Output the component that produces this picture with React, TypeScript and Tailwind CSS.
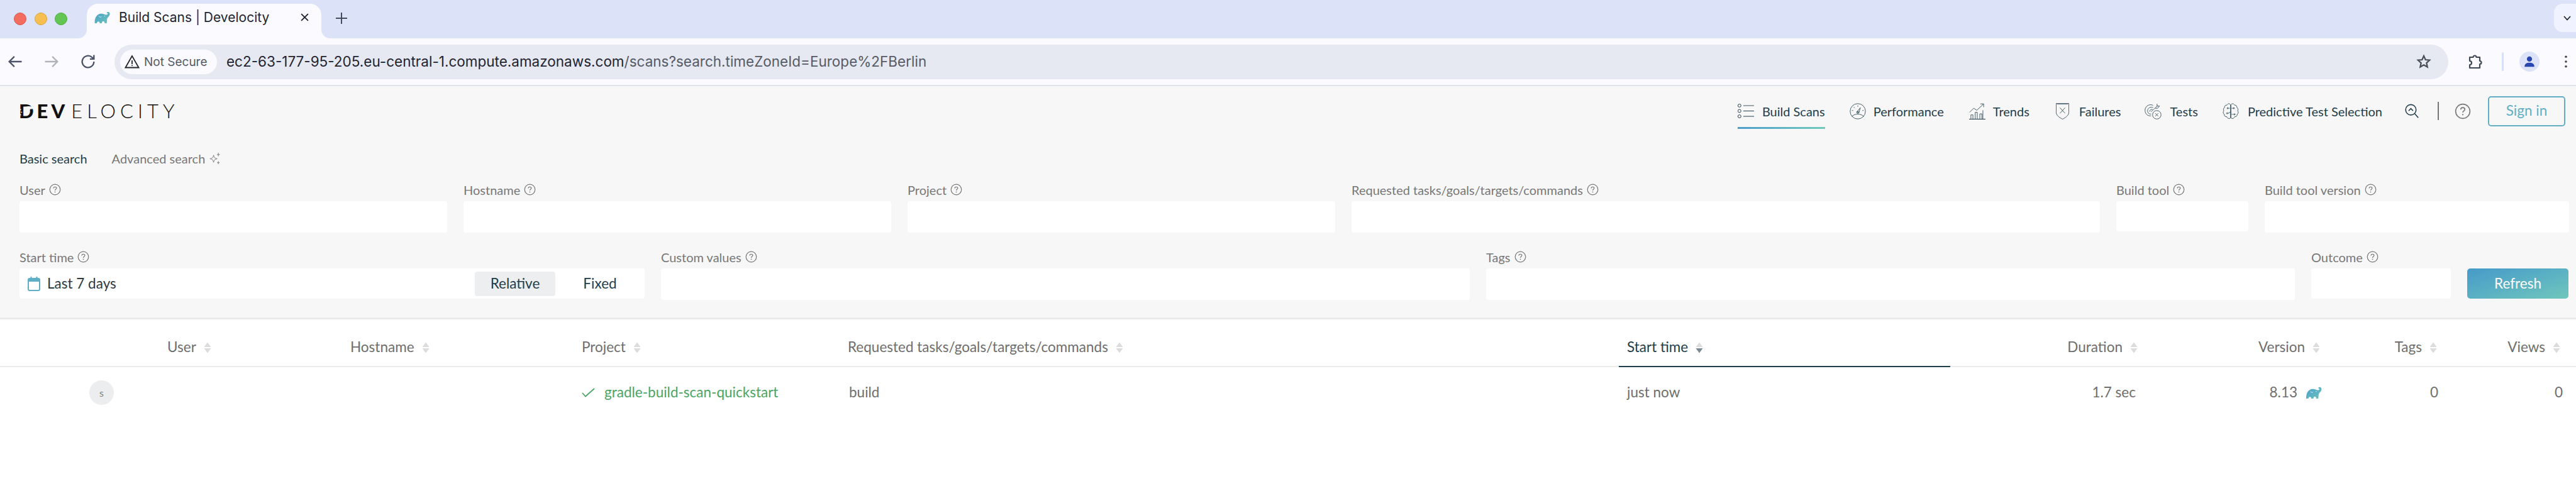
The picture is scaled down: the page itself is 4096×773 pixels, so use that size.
const F = "font-['Lato','Liberation_Sans',sans-serif]";

function Help({ className = "w-[19px] h-[19px]" }: { className?: string }) {
  return (
    <svg viewBox="0 0 16 16" className={"shrink-0 " + className} fill="none">
      <circle cx="8" cy="8" r="7" stroke="#777" strokeWidth="1" />
      <path d="M6 6.300C6 5 7 4.400 8 4.400c1.200 0 2 .8 2 1.800 0 1.400-2 1.500-2 3" stroke="#777" strokeWidth="1" />
      <circle cx="8" cy="11.300" r=".7" fill="#777" />
    </svg>
  );
}

function Sort({ down = "#dcdcdc" }: { down?: string }) {
  return (
    <svg viewBox="0 0 12 18" className="w-[12px] h-[18px] shrink-0 ml-[12px]">
      <path d="M6 0.500 11.500 8H.5z" fill="#dcdcdc" />
      <path d="M6 17.500 .5 10h11z" fill={down} />
    </svg>
  );
}

function Gradle({ className = "" }: { className?: string }) {
  return (
    <svg viewBox="0 0 32 24" className={className}>
      <defs>
        <linearGradient id="gr" x1="0" y1="0" x2="1" y2="1">
          <stop offset="0" stopColor="#4a9fc9" />
          <stop offset="1" stopColor="#6bc3bd" />
        </linearGradient>
      </defs>
      <path
        fill="url(#gr)"
        d="M1 24C0 15 4 7 11 5C15 4 19 5 22 6.500C25 7.500 27 6.500 27.500 5C27.800 3.800 26.300 3.300 25.600 4.500C24.800 3.500 25.300 1 28 1C31 1 32 4 31.300 7C30.500 10.500 27 12 26 15C25.500 18 25.500 21 25.300 24L21 24C21 21 19.500 20 18.200 20C16.500 20 15.500 21.500 15.300 24L11 24C11 21.500 10 20.500 8.200 20.500C6.500 20.500 5.300 22 5 24Z"
      />
      <path d="M9 9.500c1.500 2 3.500 2.500 5.500 1.500" stroke="#fff" strokeWidth="1" fill="none" />
      <circle cx="21" cy="9.500" r=".8" fill="#fff" />
    </svg>
  );
}

const navStroke = "#1f3d4a";

function ListIcon() {
  return (
    <svg viewBox="0 0 32 28" className="w-[26px] h-[23px] shrink-0" fill="none" stroke={navStroke} strokeWidth="1.200">
      <circle cx="3.500" cy="3.500" r="3" />
      <circle cx="3.500" cy="14" r="3" />
      <circle cx="3.500" cy="24.500" r="3" />
      <path d="M11 3.500h21" stroke="#5d7380" strokeWidth="1.500" />
      <path d="M11 14h21M11 24.500h21" />
    </svg>
  );
}
function GaugeIcon() {
  return (
    <svg viewBox="0 0 32 32" className="w-[26px] h-[26px] shrink-0" fill="none" stroke={navStroke} strokeWidth="1">
      <circle cx="16" cy="16" r="15" />
      <path d="M4.500 26c6-6 17-6 23 0" />
      <path d="M14 17.500 21 9l-2.800 10z" />
      <circle cx="16" cy="18" r="2" />
      <path d="M16 4.500v2.500M8 7.500l1.700 1.900M4.500 14.500h2.500M25 14.500h2.500" />
    </svg>
  );
}
function TrendIcon() {
  return (
    <svg viewBox="0 0 32 32" className="w-[26px] h-[26px] shrink-0" fill="none" stroke={navStroke} strokeWidth="1">
      <path d="M0 31.500h32" strokeWidth="1.400" />
      <path d="M3.500 31V23h4v8M12 31V18h4v13M21 31V21h4v10M27 31V14" />
      <path d="M1 18 9 10l6 4L28 2M22 1.500h6.500V8" />
    </svg>
  );
}
function ShieldIcon() {
  return (
    <svg viewBox="0 0 26 32" className="w-[21px] h-[26px] shrink-0" fill="none" stroke={navStroke} strokeWidth="1">
      <path d="M.5 .5h25v17c0 6-5 10-12.500 14C5.500 27.500.5 23.500.5 17.500z" />
      <path d="M2 2h22" strokeWidth=".8" />
      <path d="M8 9l10 11M18 9 8 20" />
    </svg>
  );
}
function TargetIcon() {
  return (
    <svg viewBox="0 0 34 32" className="w-[27px] h-[26px] shrink-0" fill="none" stroke={navStroke} strokeWidth="1">
      <path d="M17 4C9 .5 1 6 1 14c0 7 5 12 12 11" />
      <path d="M17 8.500c-5-2-11 1-11 6.500 0 4 3 7 7 6.500" />
      <path d="M16 12.500c-3-1-6 1-5.500 4" />
      <path d="M13 17 26 5M25 1v4.500h5L26 10h-4.500" />
      <circle cx="24.500" cy="23" r="8.500" />
      <path d="M21.500 20l6 6M27.500 20l-6 6" />
    </svg>
  );
}
function BrainIcon() {
  return (
    <svg viewBox="0 0 32 32" className="w-[26px] h-[26px] shrink-0" fill="none" stroke={navStroke} strokeWidth="1">
      <path d="M15.500 3c-2-3-6-2-7 1-3-.5-5 2-4.500 4.500C1.500 10 1 13 2.500 15 .5 17 1 21 3.500 22c-.5 3 2 5 4.500 4.500 1 3 5 5 7.500 2.500z" />
      <path d="M16.500 3c2-3 6-2 7 1 3-.5 5 2 4.500 4.500 2.500 1.500 3 4.500 1.500 6.500 2 2 1.500 6-1 7 .5 3-2 5-4.500 4.500-1 3-5 5-7.500 2.500z" />
      <path d="M16 3v26" stroke="#5d7380" strokeWidth="1.400" />
      <path d="M10 10h12M16 22h7" stroke="#5d7380" />
      <circle cx="10" cy="10" r="1.200" />
      <circle cx="22" cy="10" r="1.200" />
      <circle cx="23.500" cy="22" r="1.200" />
      <circle cx="9" cy="20" r="1.200" />
      <path d="M10 20.500 16 17" />
    </svg>
  );
}

function NavItem({ icon, label, active, className }: { icon: React.ReactNode; label: string; active?: boolean; className: string }) {
  return (
    <div className={"relative flex items-center h-full " + className}>
      {icon}
      <span className="text-[20px] text-[#1f3d4a] leading-none whitespace-nowrap">{label}</span>
      {active && (
        <div className="absolute left-0 right-0 top-[65px] h-[3px] bg-gradient-to-r from-[#4a9dcb] to-[#71c9bb]" />
      )}
    </div>
  );
}

function Label({ text }: { text: string }) {
  return (
    <div className="flex items-center gap-[6px] h-[19px] mb-[9px] text-[20px] leading-none text-[#777777] whitespace-nowrap">
      {text}
      <Help />
    </div>
  );
}

function Field({ label, width, inputH = "h-[50px]" }: { label: string; width: string; inputH?: string }) {
  return (
    <div className={"flex flex-col shrink-0 " + width}>
      <Label text={label} />
      <div className={"bg-white rounded-[4px] " + inputH} />
    </div>
  );
}

function Th({ label, className }: { label: string; className: string }) {
  return (
    <div className={"flex items-center text-[22.500px] leading-none text-[#6e6e6e] h-full whitespace-nowrap shrink-0 " + className}>
      <span>{label}</span>
      <Sort />
    </div>
  );
}

export default function App() {
  return (
    <div className={"w-[4096px] h-[773px] bg-white overflow-hidden flex flex-col " + F}>
      {/* tab strip */}
      <div className="h-[61px] bg-[#dce2f7] flex shrink-0 font-['Inter',sans-serif]">
        <div className="flex items-center gap-[12.500px] pl-[22px] w-[138px] pb-[2px] shrink-0">
          <div className="w-[20px] h-[20px] rounded-full bg-[#f26c60] border border-[#d9564c]" />
          <div className="w-[20px] h-[20px] rounded-full bg-[#f6bf4f] border border-[#dba53a]" />
          <div className="w-[20px] h-[20px] rounded-full bg-[#62c554] border border-[#4fae43]" />
        </div>
        <div className="relative mt-[6px] h-[55px] w-[373px] bg-[#fbfbff] rounded-t-[18px] flex items-center pl-[12px] pr-[20px] pb-[12px] shrink-0">
          <div className="absolute bottom-0 left-[-14px] w-[14px] h-[14px] bg-[#fbfbff]">
            <div className="w-full h-full bg-[#dce2f7] rounded-br-[14px]" />
          </div>
          <div className="absolute bottom-0 right-[-14px] w-[14px] h-[14px] bg-[#fbfbff]">
            <div className="w-full h-full bg-[#dce2f7] rounded-bl-[14px]" />
          </div>
          <Gradle className="w-[25px] h-[19px] shrink-0" />
          <span className="ml-[14px] text-[21px] leading-none text-[#1f2430] whitespace-nowrap">Build Scans | Develocity</span>
          <svg viewBox="0 0 12 12" className="ml-auto w-[13px] h-[13px] shrink-0" stroke="#1f2430" strokeWidth="1.700">
            <path d="M1 1l10 10M11 1 1 11" />
          </svg>
        </div>
        <svg viewBox="0 0 20 20" className="ml-[22px] mt-[19px] w-[20px] h-[20px] shrink-0" stroke="#444b5c" strokeWidth="2">
          <path d="M10 1v18M1 10h18" />
        </svg>
        <div className="ml-auto mt-[6px] h-[45px] w-[35px] bg-[#f0f3ff] rounded-l-[14px] flex items-center justify-end pr-[8px] shrink-0">
          <svg viewBox="0 0 12 8" className="w-[12px] h-[8px]" fill="none" stroke="#1f2430" strokeWidth="1.800">
            <path d="M1 1l5 5.500L11 1" />
          </svg>
        </div>
      </div>
      {/* toolbar */}
      <div className="h-[76px] bg-[#fbfbff] border-b-2 border-[#dfe3ea] flex items-center shrink-0 pl-[10px] font-['Inter',sans-serif]">
        <div className="flex items-center gap-[30px] shrink-0">
          <svg viewBox="0 0 24 24" className="w-[28px] h-[28px] shrink-0" fill="none" stroke="#4b5366" strokeWidth="2">
            <path d="M21 12H4M11 5l-7 7 7 7" />
          </svg>
          <svg viewBox="0 0 24 24" className="w-[28px] h-[28px] shrink-0" fill="none" stroke="#b0b3ba" strokeWidth="2">
            <path d="M3 12h17M13 5l7 7-7 7" />
          </svg>
          <svg viewBox="0 0 24 24" className="w-[28px] h-[28px] shrink-0" fill="none" stroke="#4b5366" strokeWidth="2">
            <path d="M20 12a8 8 0 1 1-2.500-5.800L20 8.500M20 3v5.500h-5.500" />
          </svg>
        </div>
        <div className="ml-[28px] w-[3711px] h-[55px] rounded-full bg-[#e6e9f2] flex items-center pl-[9px] shrink-0">
          <div className="h-[39px] w-[154px] rounded-full bg-[#fbfbff] flex items-center gap-[7px] pl-[7px] text-[19px] leading-none text-[#555a66] whitespace-nowrap shrink-0">
            <svg viewBox="0 0 24 24" className="w-[24px] h-[24px] shrink-0" fill="none" stroke="#23262e" strokeWidth="1.800">
              <path d="M12 3 1.500 21.500h21z" />
              <path d="M12 10v6M12 17.500v1.500" />
            </svg>
            Not Secure
          </div>
          <div className="ml-[15px] text-[22.500px] leading-none text-[#555a66] whitespace-nowrap">
            <span className="text-[#1f2430]">ec2-63-177-95-205.eu-central-1.compute.amazonaws.com</span>
            /scans?search.timeZoneId=Europe%2FBerlin
          </div>
          <svg viewBox="0 0 24 24" className="ml-auto mr-[27px] w-[24px] h-[24px] shrink-0" fill="none" stroke="#474c59" strokeWidth="2.200">
            <path d="m12 3 2.700 6 6.500.7-4.900 4.400 1.400 6.400L12 17.200 6.300 20.500l1.400-6.400-4.900-4.400 6.500-.7z" />
          </svg>
        </div>
        <svg viewBox="0 0 24 24" className="ml-[30px] w-[24px] h-[24px] shrink-0" fill="none" stroke="#3f4656" strokeWidth="2.200" strokeLinejoin="round">
          <path d="M4 5h5.500a2.500 2.500 0 0 1 5 0H20v6a2.500 2.500 0 0 1 0 5v6H4v-5a2.500 2.500 0 0 0 0-6z" />
        </svg>
        <div className="ml-[31px] w-[3px] h-[30px] rounded-full bg-[#d8e0f8] shrink-0" />
        <div className="ml-[25px] w-[32px] h-[32px] rounded-full bg-[#dce2f7] flex items-center justify-center shrink-0">
          <svg viewBox="0 0 24 24" className="w-[22px] h-[22px]" fill="#2a46b0">
            <circle cx="12" cy="7.500" r="4.500" />
            <path d="M3.500 21c0-5 3.500-7 8.500-7s8.500 2 8.500 7z" />
          </svg>
        </div>
        <svg viewBox="0 0 4 22" className="ml-[40px] w-[4px] h-[20px] shrink-0" fill="#3f4656">
          <circle cx="2" cy="2.500" r="2" />
          <circle cx="2" cy="11" r="2" />
          <circle cx="2" cy="19.500" r="2" />
        </svg>
      </div>
      {/* app header + search */}
      <div className="h-[371px] bg-[#f7f7f7] border-b-[3px] border-[#ebebeb] shrink-0 flex flex-col">
        <div className="h-[79px] pl-[30px] pr-[17px] flex items-center shrink-0">
          <div className="relative flex items-center text-[31px] leading-none text-[#111]">
            <span className="font-black tracking-[5px]">DEV</span>
            <span className="font-light tracking-[7px] ml-[5px]">ELOCITY</span>
            <svg viewBox="0 0 30 24" className="absolute left-[1px] top-[5px] w-[25px] h-[20px]" aria-hidden="true">
              <path d="M8 6c6-3 13-3 18-1 1 3-1 4-4 4-2 0-3 2-4 5-2 1-3-1-5-3-2-1-4-2-5-5z" fill="#f7f7f7" />
              <path d="M1 9h2v2H1zM3 14h2v2H3zM0 19h3v2H0z" fill="#f7f7f7" />
            </svg>
          </div>
          <div className="ml-auto flex items-center h-full">
            <NavItem icon={<ListIcon />} label="Build Scans" active className="gap-[13px]" />
            <NavItem icon={<GaugeIcon />} label="Performance" className="gap-[12px] ml-[39px]" />
            <NavItem icon={<TrendIcon />} label="Trends" className="gap-[12px] ml-[40px]" />
            <NavItem icon={<ShieldIcon />} label="Failures" className="gap-[16px] ml-[42px]" />
            <NavItem icon={<TargetIcon />} label="Tests" className="gap-[13px] ml-[38px]" />
            <NavItem icon={<BrainIcon />} label="Predictive Test Selection" className="gap-[14px] ml-[39px]" />
            <svg viewBox="0 0 28 30" className="ml-[36px] w-[22px] h-[24px] shrink-0" fill="none" stroke="#1f3d4a" strokeWidth="2">
              <circle cx="12" cy="12" r="10.500" />
              <path d="M20 20l7 8M7.500 14 12 9.500l4.500 4.500" />
            </svg>
            <div className="ml-[30px] w-[2px] h-[29px] bg-[#777] shrink-0" />
            <Help className="ml-[25px] w-[26px] h-[26px]" />
            <div className="ml-[27px] w-[123px] h-[48px] border-2 border-[#62afc5] rounded-[5px] flex items-center justify-center text-[22.500px] leading-none text-[#62afc5] shrink-0">
              Sign in
            </div>
          </div>
        </div>
        <div className="pl-[31px] pr-[11px] flex flex-col">
          <div className="flex items-center h-[22px] mt-[25px] mb-[29px] text-[20px] leading-none">
            <span className="text-[#1f3d4a]">Basic search</span>
            <span className="ml-[39px] text-[#777777]">Advanced search</span>
            <svg viewBox="0 0 20 22" className="ml-[6px] w-[19px] h-[21px]" fill="none" stroke="#777" strokeWidth="1">
              <path d="M8 5c.7 4 2 5.300 6 6-4 .7-5.300 2-6 6-.7-4-2-5.300-6-6 4-.7 5.300-2 6-6z" />
              <path d="M16 1v6M13.500 4h5M16 15v5M14 17.500h4" />
            </svg>
          </div>
          <div className="flex gap-[26px] items-start">
            <Field label="User" width="w-[680px]" />
            <Field label="Hostname" width="w-[680px]" />
            <Field label="Project" width="w-[680px]" />
            <Field label="Requested tasks/goals/targets/commands" width="w-[1190px]" />
            <Field label="Build tool" width="w-[210px]" inputH="h-[48px]" />
            <Field label="Build tool version" width="w-[484px]" />
          </div>
          <div className="flex gap-[26px] items-start mt-[29px]">
            <div className="flex flex-col w-[994px] shrink-0">
              <Label text="Start time" />
              <div className="h-[48px] bg-white rounded-[4px] flex items-center pl-[13px]">
                <svg viewBox="0 0 20 23" className="w-[20px] h-[23px] shrink-0" fill="none">
                  <rect x="1" y="3" width="18" height="19" rx="2" fill="#fff" stroke="#5fafc6" strokeWidth="2" />
                  <path d="M1 5a2 2 0 0 1 2-2h14a2 2 0 0 1 2 2v3H1z" fill="#5fafc6" />
                  <path d="M5.500 0v4M14.500 0v4" stroke="#5fafc6" strokeWidth="2" />
                </svg>
                <span className="ml-[11px] text-[22.500px] leading-none text-[#2b3a42] whitespace-nowrap">Last 7 days</span>
                <div className="ml-auto w-[128px] h-[39px] bg-[#eceef0] rounded-[4px] flex items-center justify-center text-[22.500px] leading-none text-[#1f3d4a] shrink-0">
                  Relative
                </div>
                <div className="w-[142px] text-center text-[22.500px] leading-none text-[#1f3d4a] shrink-0">Fixed</div>
              </div>
            </div>
            <Field label="Custom values" width="w-[1286px]" />
            <Field label="Tags" width="w-[1286px]" />
            <Field label="Outcome" width="w-[222px]" inputH="h-[48px]" />
            <div className="w-[161px] h-[48px] mt-[28px] rounded-[5px] bg-gradient-to-br from-[#469ac9] to-[#70c6bb] flex items-center justify-center text-white text-[22.500px] leading-none shrink-0">
              Refresh
            </div>
          </div>
        </div>
      </div>
      {/* table */}
      <div className="flex-1 bg-white flex flex-col">
        <div className="h-[76px] flex border-b-[2px] border-[#ebebeb] pt-[15px] pl-[266px] items-stretch shrink-0">
          <Th label="User" className="w-[291px]" />
          <Th label="Hostname" className="w-[368px]" />
          <Th label="Project" className="w-[423px]" />
          <Th label="Requested tasks/goals/targets/commands" className="w-[1226px]" />
          <div className="relative w-[527px] h-full flex items-center pl-[13px] text-[22.500px] leading-none text-[#1f3d4a] whitespace-nowrap shrink-0">
            <span>Start time</span>
            <Sort down="#7a8a90" />
            <div className="absolute left-0 right-0 bottom-[-2px] h-[2px] bg-[#1f3d4a]" />
          </div>
          <Th label="Duration" className="w-[298px] justify-end" />
          <Th label="Version" className="w-[290px] justify-end" />
          <Th label="Tags" className="w-[186px] justify-end" />
          <Th label="Views" className="w-[196px] justify-end" />
        </div>
        <div className="flex h-[81px] items-center text-[22.500px] leading-none text-[#6e6e6e]">
          <div className="w-[925px] pl-[142px] shrink-0">
            <div className="w-[39px] h-[39px] rounded-full bg-[#ecedef] flex items-center justify-center text-[16px] text-[#808080]">
              s
            </div>
          </div>
          <div className="w-[425px] flex items-center shrink-0 text-[#4aa564] whitespace-nowrap">
            <svg viewBox="0 0 21 15" className="w-[21px] h-[15px] mr-[15px] shrink-0" fill="none" stroke="#4aa564" strokeWidth="1.700">
              <path d="M1 8l5 5.500L20 1" />
            </svg>
            gradle-build-scan-quickstart
          </div>
          <div className="w-[1224px] shrink-0">build</div>
          <div className="w-[527px] shrink-0 pl-[13px]">just now</div>
          <div className="w-[298px] shrink-0 text-right pr-[3px]">1.7 sec</div>
          <div className="w-[293px] shrink-0 flex items-center justify-end gap-[13px]">
            8.13
            <Gradle className="w-[26px] h-[19px]" />
          </div>
          <div className="w-[185px] shrink-0 text-right">0</div>
          <div className="w-[198px] shrink-0 text-right">0</div>
        </div>
      </div>
    </div>
  );
}
